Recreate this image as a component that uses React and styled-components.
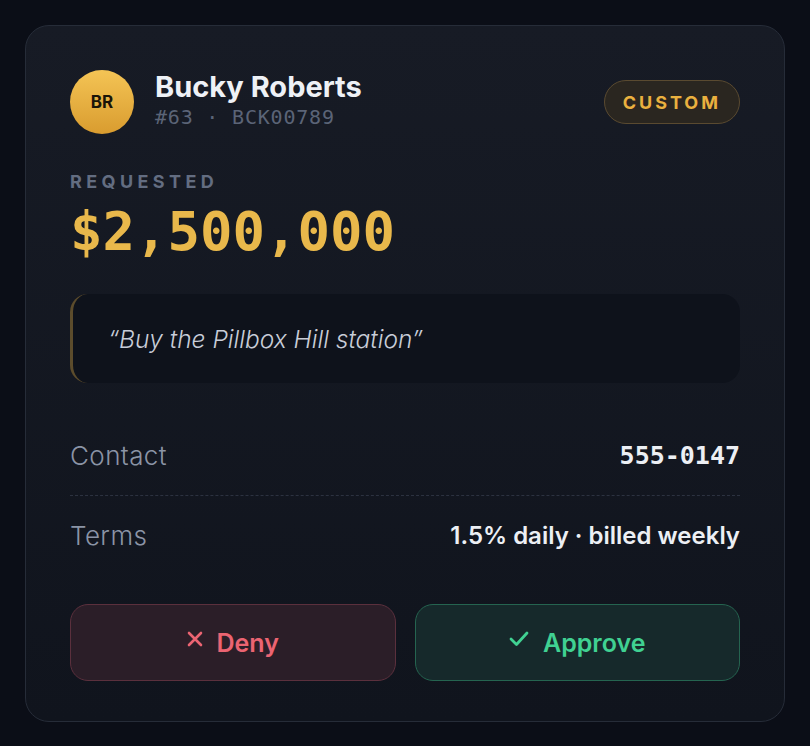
import styled, { createGlobalStyle } from "styled-components"

const GlobalStyle = createGlobalStyle`
    html, body {
        margin: 0;
        padding: 0;
        background: #0b0e17;
        font-family: Inter, "Noto Sans", sans-serif;
    }
`

const Page = styled.div`
    min-height: 746px;
    padding: 25px;
    box-sizing: border-box;
`

const Card = styled.div`
    width: 760px;
    box-sizing: border-box;
    padding: 44px 44px 40px;
    border-radius: 24px;
    border: 1.5px solid #262c38;
    background: linear-gradient(180deg, #171b25 0%, #10141d 100%);
    display: flex;
    flex-direction: column;
`

const Header = styled.div`
    display: flex;
    align-items: center;
    justify-content: space-between;
`

const Who = styled.div`
    display: flex;
    align-items: center;
    gap: 21px;
`

const Avatar = styled.div`
    width: 64px;
    height: 64px;
    border-radius: 50%;
    background: linear-gradient(180deg, #f4c455 0%, #d99c2f 100%);
    display: flex;
    align-items: center;
    justify-content: center;
    color: #1a1408;
    font-weight: 700;
    font-size: 17px;
`

const Name = styled.div`
    font-size: 29px;
    font-weight: 700;
    color: #eef1f6;
    line-height: 32px;
    margin-top: -4px;
`

const Sub = styled.div`
    font-family: "DejaVu Sans Mono", monospace;
    font-size: 20px;
    letter-spacing: 0.8px;
    color: #5b6477;
    margin-top: 2px;
`

const Badge = styled.div`
    height: 44px;
    box-sizing: border-box;
    padding: 0 18px;
    border-radius: 22px;
    border: 1.5px solid #5a4a30;
    background: #2a2620;
    color: #eab13f;
    font-size: 18px;
    font-weight: 700;
    letter-spacing: 3px;
    display: flex;
    align-items: center;
`

const Label = styled.div`
    margin-top: 38px;
    font-size: 18px;
    font-weight: 700;
    letter-spacing: 4.4px;
    color: #636d81;
    line-height: 20px;
`

const Amount = styled.div`
    font-family: "DejaVu Sans Mono", monospace;
    font-size: 54px;
    font-weight: 700;
    color: #e9b84b;
    line-height: 64px;
    margin-top: 8px;
`

const Quote = styled.div`
    margin-top: 30px;
    height: 89px;
    box-sizing: border-box;
    border-radius: 18px;
    border-left: 3px solid #5c4c2c;
    background: #0e121b;
    display: flex;
    align-items: center;
    padding-left: 35px;
    font-size: 24.5px;
    font-style: italic;
    font-weight: 300;
    color: #c8cdd8;
`

const Details = styled.div`
    margin-top: 33px;
    display: flex;
    flex-direction: column;
`

const Row = styled.div`
    display: flex;
    justify-content: space-between;
    align-items: center;
    height: 79px;
    border-bottom: ${props => props.last ? "none" : "1px dashed #2c3240"};
`

const Key = styled.span`
    font-size: 26px;
    font-weight: 300;
    letter-spacing: 0.4px;
    color: #8b94a6;
`

const Value = styled.span`
    font-size: 24px;
    font-weight: 600;
    color: #eceff4;
    font-family: ${props => props.mono ? '"DejaVu Sans Mono", monospace' : 'Inter, "Noto Sans", sans-serif'};
    ${props => props.mono && "font-size: 25px; font-weight: 700;"}
`

const Actions = styled.div`
    margin-top: 29px;
    display: grid;
    grid-template-columns: 1fr 1fr;
    gap: 19px;
`

const Button = styled.button`
    height: 77px;
    border-radius: 18px;
    border: 1.5px solid ${props => props.tone === "deny" ? "#5b303d" : "#256450"};
    background: ${props => props.tone === "deny" ? "#2b1e28" : "#16292b"};
    color: ${props => props.tone === "deny" ? "#eb6472" : "#40d192"};
    font-family: Inter, "Noto Sans", sans-serif;
    font-size: 25px;
    font-weight: 600;
    display: flex;
    align-items: center;
    justify-content: center;
    gap: 14px;
    cursor: pointer;

    svg {
        margin-top: -8px;
    }
`

export default function App() {
    return (
        <Page>
            <GlobalStyle />
            <Card>
                <Header>
                    <Who>
                        <Avatar>BR</Avatar>
                        <div>
                            <Name>Bucky Roberts</Name>
                            <Sub>#63 · BCK00789</Sub>
                        </div>
                    </Who>
                    <Badge>CUSTOM</Badge>
                </Header>
                <Label>REQUESTED</Label>
                <Amount>$2,500,000</Amount>
                <Quote>“Buy the Pillbox Hill station”</Quote>
                <Details>
                    <Row>
                        <Key>Contact</Key>
                        <Value mono>555-0147</Value>
                    </Row>
                    <Row last>
                        <Key>Terms</Key>
                        <Value>1.5% daily · billed weekly</Value>
                    </Row>
                </Details>
                <Actions>
                    <Button tone="deny">
                        <svg width="16" height="16" viewBox="0 0 16 16" fill="none" stroke="currentColor" strokeWidth="2.6" strokeLinecap="round">
                            <path d="M2 2 L14 14 M14 2 L2 14" />
                        </svg>
                        Deny
                    </Button>
                    <Button tone="approve">
                        <svg width="20" height="16" viewBox="0 0 20 16" fill="none" stroke="currentColor" strokeWidth="2.8" strokeLinecap="round" strokeLinejoin="round">
                            <path d="M2 8 L7.5 13.5 L18 2" />
                        </svg>
                        Approve
                    </Button>
                </Actions>
            </Card>
        </Page>
    )
}
